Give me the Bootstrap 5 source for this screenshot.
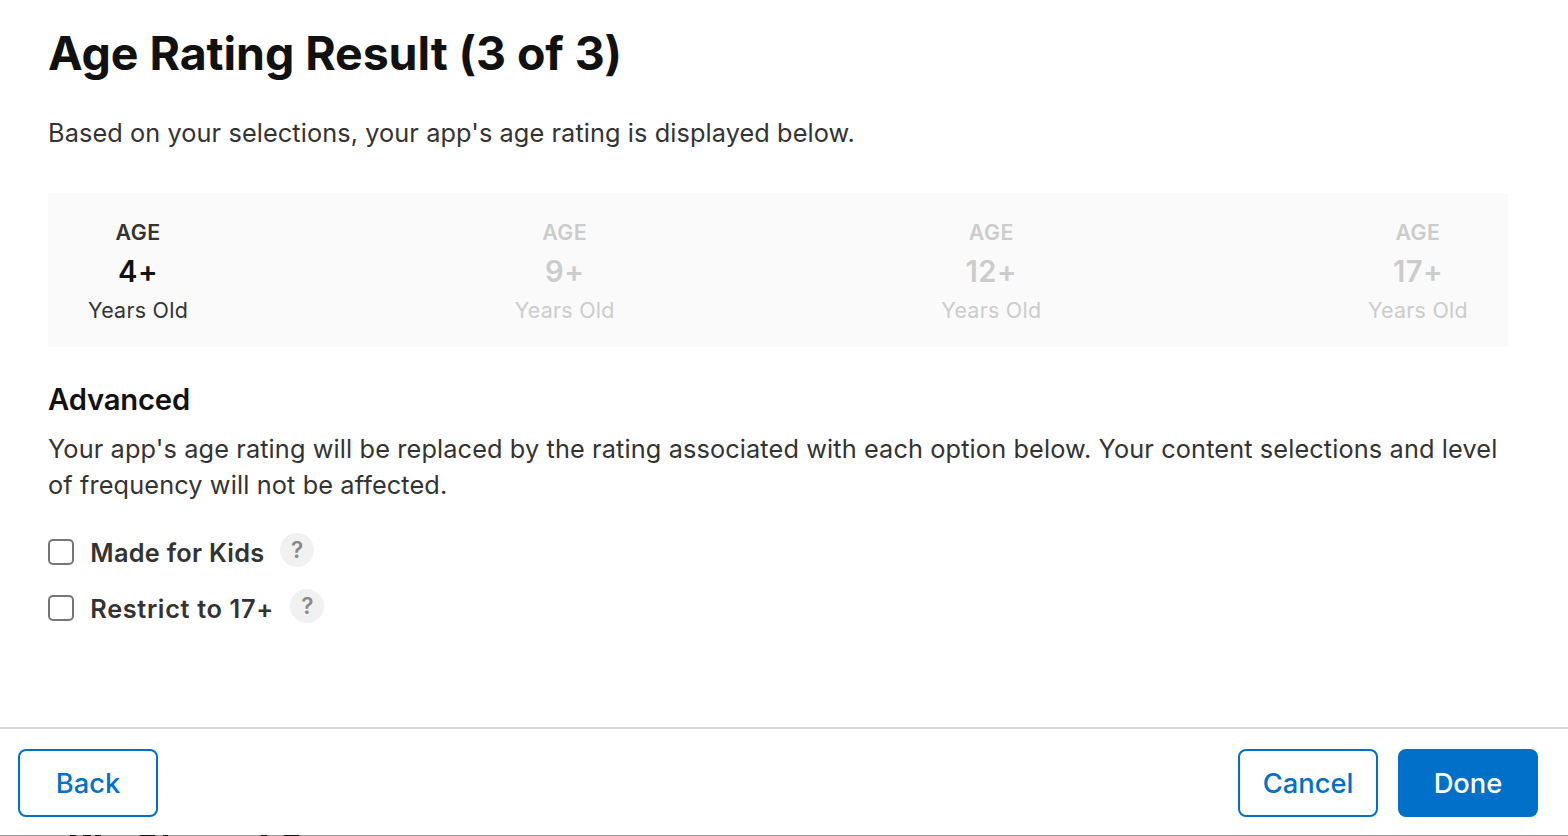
<!DOCTYPE html>
<html lang="en">
<head>
<meta charset="utf-8">
<title>Age Rating Result</title>
<link href="https://cdn.jsdelivr.net/npm/bootstrap@5.3.0/dist/css/bootstrap.min.css" rel="stylesheet">
<style>
body{font-family:Inter,"Liberation Sans",sans-serif;color:#333;height:836px;overflow:hidden}
.dialog{height:836px}
.content{padding:23px 60px 0 48px}
.dialog-title{font-size:46.5px;line-height:60px;font-weight:700;color:#111;letter-spacing:-.08px}
.copy{font-size:25.3px;line-height:36px;letter-spacing:.12px}
.intro{margin-top:32px;letter-spacing:.09px}
.ratings{margin-top:42px;height:154px;padding:20px 40px;background:#fafafa}
.rating{color:#ccc;font-size:21.4px;line-height:39px;letter-spacing:.28px}
.rating strong{display:block;height:39px;font-size:29.2px;line-height:40px;font-weight:600;letter-spacing:.4px}
.rating.active{color:#333}
.rating.active strong{color:#111}
.age-label{font-weight:600;letter-spacing:.45px}
.section-title{font-size:29.2px;line-height:36px;font-weight:600;color:#111;letter-spacing:-.15px;margin-top:35px}
.details{margin-top:13px}
.options{margin-top:30px}
.option{height:38px;margin-bottom:18px}
.option .form-check-input{width:26px;height:26px;border:2px solid #777;border-radius:5px;margin:0}
.option label{font-size:25.3px;line-height:38px;font-weight:600;letter-spacing:.3px;margin-left:16.3px;padding-top:2px}
.option .wide-label{letter-spacing:.66px}
.help{width:34px;height:34px;background:#f1f1f1;color:#888;font-size:22.5px;font-weight:600;line-height:34px;margin:0 0 4px 15.5px}
.wide-label+.help{margin-left:16.5px}
.actions{height:109px;border-top:2px solid #d6d6d6;padding:20px 30px 0 18px}
.action{width:140px;height:68px;border:2px solid #0070c9;border-radius:8px;font-size:27.3px;font-weight:500;padding:2px 0 0;--bs-btn-color:#0070c9}
.action-main{background:#0070c9;color:#fff;margin-left:20px}
.underlay{left:0;bottom:0;width:100%;height:1px}
</style>
</head>
<body>
<main class="dialog d-flex flex-column bg-white position-relative">
<section class="content flex-grow-1">
<h1 class="dialog-title mb-0">Age Rating Result (3 of 3)</h1>
<p class="copy intro mb-0">Based on your selections, your app's age rating is displayed below.</p>
<div class="ratings d-flex justify-content-between text-center">
<div class="rating active"><div class="age-label">AGE</div><strong>4+</strong><div>Years Old</div></div>
<div class="rating"><div class="age-label">AGE</div><strong>9+</strong><div>Years Old</div></div>
<div class="rating"><div class="age-label">AGE</div><strong>12+</strong><div>Years Old</div></div>
<div class="rating"><div class="age-label">AGE</div><strong>17+</strong><div>Years Old</div></div>
</div>
<h2 class="section-title mb-0">Advanced</h2>
<p class="copy details mb-0">Your app's age rating will be replaced by the rating associated with each option below. Your content selections and level<br>of frequency will not be affected.</p>
<div class="options">
<div class="option d-flex align-items-center"><input class="form-check-input" type="checkbox" id="kids"><label for="kids">Made for Kids</label><span class="help rounded-circle text-center">?</span></div>
<div class="option d-flex align-items-center"><input class="form-check-input" type="checkbox" id="restrict"><label class="wide-label" for="restrict">Restrict to 17+</label><span class="help rounded-circle text-center">?</span></div>
</div>
</section>
<footer class="actions d-flex">
<button class="btn action">Back</button>
<button class="btn action ms-auto">Cancel</button>
<button class="btn action action-main">Done</button>
</footer>
<!-- sliver of the page beneath the dialog's lower edge -->
<svg class="underlay position-absolute" viewBox="0 0 1568 1" preserveAspectRatio="none" aria-hidden="true">
<path d="M0 .5H1568" stroke="#999"/>
<path d="M70 .5h6M83 .5h8M95 .5h6M140 .5h15M163 .5h5M261 .5h6M284 .5h15" stroke="#111"/>
</svg>
</main>
<script src="https://cdn.jsdelivr.net/npm/bootstrap@5.3.0/dist/js/bootstrap.bundle.min.js"></script>
</body>
</html>
